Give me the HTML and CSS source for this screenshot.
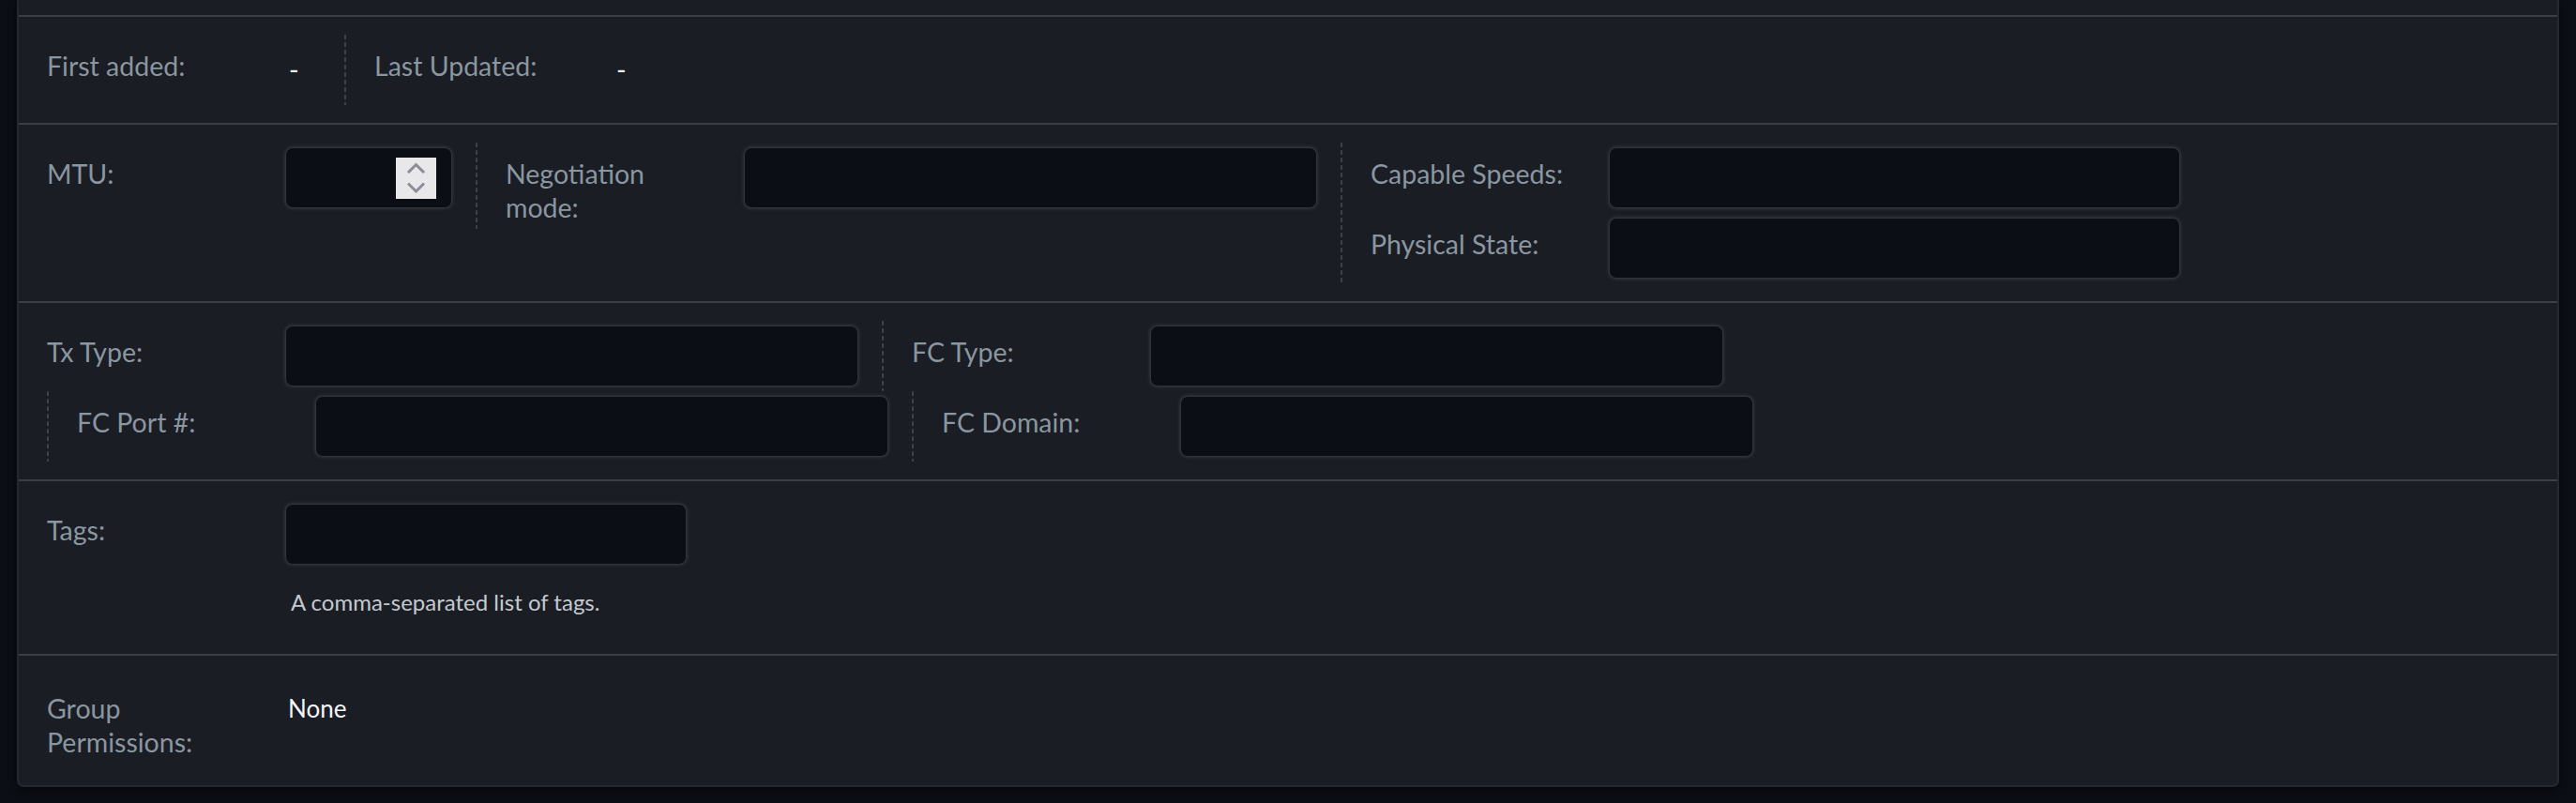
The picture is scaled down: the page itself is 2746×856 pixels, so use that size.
FILE: index.html
```html
<!DOCTYPE html>
<html lang="en">
<head>
<meta charset="utf-8">
<title>Interface</title>
<link rel="stylesheet" href="styles.css">
</head>
<body>
<div class="card">
  <div class="section section-tail"></div>

  <div class="section">
    <div class="row">
      <div class="field">
        <div class="label">First added:</div>
        <div class="value value-dash">-</div>
      </div>
      <div class="field sep">
        <div class="label">Last Updated:</div>
        <div class="value value-dash">-</div>
      </div>
    </div>
  </div>

  <div class="section">
    <div class="row">
      <div class="field">
        <div class="label">MTU:</div>
        <div class="input input-mtu">
          <div class="spinner">
            <svg width="43" height="44" viewBox="0 0 43 44">
              <polyline points="13,16 21.5,7.5 30,16" fill="none" stroke="#8e8c9a" stroke-width="3"/>
              <polyline points="13,27.5 21.5,36 30,27.5" fill="none" stroke="#8e8c9a" stroke-width="3"/>
            </svg>
          </div>
        </div>
      </div>
      <div class="field sep">
        <div class="label">Negotiation mode:</div>
        <div class="input input-wide"></div>
      </div>
      <div class="field sep">
        <div class="stack">
          <div class="pair">
            <div class="label">Capable Speeds:</div>
            <div class="input input-speed"></div>
          </div>
          <div class="pair">
            <div class="label">Physical State:</div>
            <div class="input input-speed"></div>
          </div>
        </div>
      </div>
    </div>
  </div>

  <div class="section">
    <div class="row">
      <div class="field">
        <div class="label">Tx Type:</div>
        <div class="input input-wide"></div>
      </div>
      <div class="field sep">
        <div class="label">FC Type:</div>
        <div class="input input-wide"></div>
      </div>
    </div>
    <div class="row">
      <div class="field sep">
        <div class="label">FC Port #:</div>
        <div class="input input-wide"></div>
      </div>
      <div class="field sep">
        <div class="label">FC Domain:</div>
        <div class="input input-wide"></div>
      </div>
    </div>
  </div>

  <div class="section">
    <div class="row">
      <div class="field">
        <div class="label">Tags:</div>
        <div class="control">
          <div class="input input-tags"></div>
          <div class="help">A comma-separated list of tags.</div>
        </div>
      </div>
    </div>
  </div>

  <div class="section section-last">
    <div class="row">
      <div class="field">
        <div class="label">Group Permissions:</div>
        <div class="value value-strong">None</div>
      </div>
    </div>
  </div>
</div>
</body>
</html>
```

FILE: styles.css
```css
* {
  box-sizing: border-box;
}

html, body {
  margin: 0;
  padding: 0;
  background: #0b0e14;
}

body {
  padding: 0 18px;
  height: 856px;
  overflow: hidden;
  font-family: "Lato", "Liberation Sans", sans-serif;
  font-size: 28.5px;
  color: #8a96a0;
}

.card {
  background: #1a1d24;
  border: 2px solid #25282f;
  border-top: 0;
  border-radius: 0 0 7px 7px;
  box-shadow: 0 3px 10px rgba(0, 0, 0, 0.55);
}

.section {
  padding: 19px 30px;
  border-bottom: 2px solid #3a3e46;
}

.section-tail {
  height: 18px;
  padding: 0;
}

.section-last {
  border-bottom: 0;
  padding: 23px 30px;
}

.row {
  display: flex;
  align-items: flex-start;
}

.field {
  display: flex;
  align-items: flex-start;
  padding: 5px 25px 5px 0;
}

.field.sep {
  padding-left: 32px;
  background-image: linear-gradient(to bottom, #3c4049 0, #3c4049 5px, transparent 5px);
  background-size: 2px 8px;
  background-repeat: repeat-y;
  background-position: 0 0;
}

.label {
  width: 254px;
  flex-shrink: 0;
  padding: 10px 34px 0 0;
  line-height: 36px;
  color: #8a96a0;
}

.value {
  min-height: 65px;
  padding-top: 10px;
  line-height: 36px;
}

.value-dash {
  min-width: 38px;
  color: #f2f3f5;
  padding-left: 4px;
  padding-top: 14px;
}

.value-strong {
  color: #f4f5f7;
  padding-left: 3px;
  font-size: 26px;
}

.input {
  height: 65px;
  background: #0b0e15;
  border: 1px solid #30343c;
  border-radius: 8px;
  box-shadow: 0 0 4px rgba(120, 126, 138, 0.35);
}

.input-mtu {
  width: 178px;
  display: flex;
  align-items: center;
  justify-content: flex-end;
  padding-right: 16px;
}

.spinner {
  width: 43px;
  height: 44px;
  background: #e8e8eb;
  display: flex;
}

.input-wide {
  width: 611px;
}

.input-speed {
  width: 609px;
}

.input-tags {
  width: 428px;
}

.stack {
  display: flex;
  flex-direction: column;
  gap: 10px;
}

.pair {
  display: flex;
  align-items: flex-start;
}

.control {
  display: flex;
  flex-direction: column;
}

.help {
  margin: 24px 0 16px 6px;
  line-height: 31px;
  font-size: 24px;
  color: #c4c9cf;
}
```
